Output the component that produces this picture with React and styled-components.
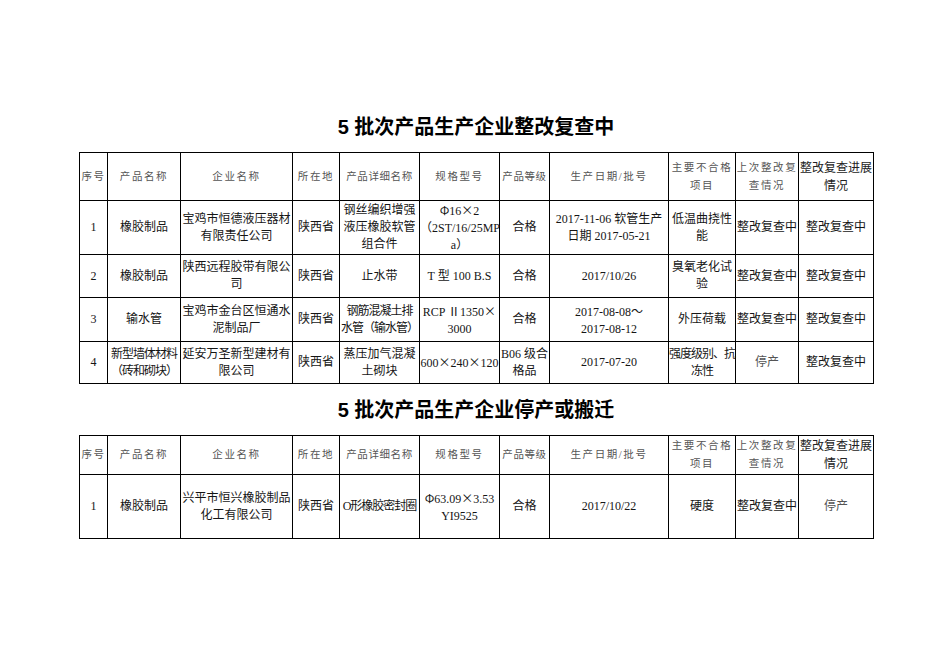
import React from "react";
import styled, { createGlobalStyle } from "styled-components";

const Global = createGlobalStyle`
  html, body { margin: 0; padding: 0; background: #fff; }
  body { font-family: "Liberation Serif", "Noto Sans CJK SC", serif; color: #111; }
`;

const Page = styled.main`
  width: 936px;
  min-height: 662px;
  padding: 115px 0 0 79px;
  box-sizing: border-box;
`;

const Section = styled.section`
  width: 794px;
  display: flex;
  flex-direction: column;
  margin-bottom: 14px;
`;

const Title = styled.h1`
  margin: 0 0 13px;
  height: 24px;
  line-height: 24px;
  font-family: "Liberation Sans", "Noto Sans CJK SC", sans-serif;
  font-weight: 700;
  font-size: 20px;
  text-align: center;
  color: #000;
`;

const Table = styled.table`
  width: 794px;
  table-layout: fixed;
  border-collapse: collapse;
`;

const HeadCell = styled.th`
  border: 1px solid #000;
  padding: 0;
  font-weight: 400;
  font-size: ${(p) => (p.$plain ? "12px" : "10.5px")};
  letter-spacing: ${(p) => (p.$plain ? "0" : "1.6px")};
  color: ${(p) => (p.$plain ? "#222" : "#555")};
  line-height: 18px;
  text-align: center;
  vertical-align: middle;
  white-space: nowrap;
  overflow: visible;
`;

const Cell = styled.td`
  border: 1px solid #000;
  padding: 0;
  font-size: 12px;
  line-height: 17px;
  color: ${(p) => (p.$muted ? "#555" : "#151515")};
  letter-spacing: ${(p) => (p.$tight ? "-1px" : "0")};
  text-align: center;
  vertical-align: middle;
  white-space: nowrap;
  overflow: visible;
`;

const Row = styled.tr`
  height: ${(p) => p.$h}px;
`;

const Line = styled.span`
  display: block;
`;

const Wide = styled.span`
  font-family: "Noto Sans CJK SC", sans-serif;
`;

const widths = [28, 73, 112, 47, 80, 80, 50, 119, 67, 63, 75];

const headers = [
  { t: "序号" },
  { t: "产品名称" },
  { t: "企业名称" },
  { t: "所在地" },
  { t: "产品详细名称", tight: true },
  { t: "规格型号" },
  { t: "产品等级", tight: true },
  { t: "生产日期/批号" },
  { t: ["主要不合格", "项目"] },
  { t: ["上次整改复", "查情况"] },
  { t: ["整改复查进展", "情况"], plain: true },
];

const wideChars = /([×Φ～])/;

const renderLine = (s) =>
  s
    .split(wideChars)
    .map((part, i) =>
      wideChars.test(part) ? <Wide key={i}>{part}</Wide> : part
    );

const renderText = (t) =>
  Array.isArray(t)
    ? t.map((l, i) => <Line key={i}>{renderLine(l)}</Line>)
    : renderLine(t);

const Header = ({ h }) => (
  <Row $h={h}>
    {headers.map((c, i) => (
      <HeadCell
        key={i}
        $plain={c.plain}
        style={c.tight ? { letterSpacing: "0.6px" } : undefined}
      >
        {renderText(c.t)}
      </HeadCell>
    ))}
  </Row>
);

const table1 = [
  {
    h: 53,
    cells: [
      "1",
      "橡胶制品",
      ["宝鸡市恒德液压器材", "有限责任公司"],
      "陕西省",
      ["钢丝编织增强", "液压橡胶软管", "组合件"],
      ["Φ16×2", "（2ST/16/25MP", "a）"],
      "合格",
      ["2017-11-06 软管生产", "日期 2017-05-21"],
      ["低温曲挠性", "能"],
      "整改复查中",
      "整改复查中",
    ],
  },
  {
    h: 43,
    cells: [
      "2",
      "橡胶制品",
      ["陕西远程胶带有限公", "司"],
      "陕西省",
      "止水带",
      "T 型 100 B.S",
      "合格",
      "2017/10/26",
      ["臭氧老化试", "验"],
      "整改复查中",
      "整改复查中",
    ],
  },
  {
    h: 44,
    tight: [4],
    cells: [
      "3",
      "输水管",
      ["宝鸡市金台区恒通水", "泥制品厂"],
      "陕西省",
      ["钢筋混凝土排", "水管（输水管）"],
      ["RCP  Ⅱ1350×", "3000"],
      "合格",
      ["2017-08-08～", "2017-08-12"],
      "外压荷载",
      "整改复查中",
      "整改复查中",
    ],
  },
  {
    h: 42,
    tight: [1, 8],
    muted: [9],
    cells: [
      "4",
      ["新型墙体材料", "（砖和砌块）"],
      ["延安万圣新型建材有", "限公司"],
      "陕西省",
      ["蒸压加气混凝", "土砌块"],
      "600×240×120",
      ["B06 级合", "格品"],
      "2017-07-20",
      ["强度级别、抗", "冻性"],
      "停产",
      "整改复查中",
    ],
  },
];

const table2 = [
  {
    h: 64,
    tight: [4],
    muted: [10],
    cells: [
      "1",
      "橡胶制品",
      ["兴平市恒兴橡胶制品", "化工有限公司"],
      "陕西省",
      "O形橡胶密封圈",
      ["Φ63.09×3.53", "YI9525"],
      "合格",
      "2017/10/22",
      "硬度",
      "整改复查中",
      "停产",
    ],
  },
];

const DataTable = ({ headH, rows }) => (
  <Table>
    <colgroup>
      {widths.map((w, i) => (
        <col key={i} style={{ width: w }} />
      ))}
    </colgroup>
    <tbody>
      <Header h={headH} />
      {rows.map((r, ri) => (
        <Row key={ri} $h={r.h}>
          {r.cells.map((c, ci) => (
            <Cell
              key={ci}
              $tight={r.tight && r.tight.includes(ci)}
              $muted={r.muted && r.muted.includes(ci)}
            >
              {renderText(c)}
            </Cell>
          ))}
        </Row>
      ))}
    </tbody>
  </Table>
);

export default function App() {
  return (
    <>
      <Global />
      <Page>
        <Section>
          <Title>5 批次产品生产企业整改复查中</Title>
          <DataTable headH={48} rows={table1} />
        </Section>
        <Section>
          <Title>5 批次产品生产企业停产或搬迁</Title>
          <DataTable headH={39} rows={table2} />
        </Section>
      </Page>
    </>
  );
}
